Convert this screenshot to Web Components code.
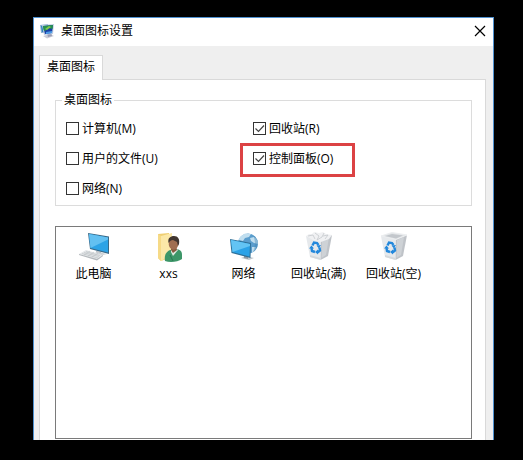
<!DOCTYPE html>
<html lang="zh-CN">
<head>
<meta charset="utf-8">
<title>桌面图标设置</title>
<style>
  html {
    background: #000;
  }

  body {
    box-sizing: border-box;
    display: flex;
    min-height: 100vh;
    margin: 0;
    padding: 17px 29px 20px 33px;
    color: #000;
    font: 12px/16px "Open Sans", "Noto Sans CJK SC", sans-serif;
  }
</style>
</head>
<body>
  <settings-dialog heading="桌面图标设置">
    <tab-panel tab="桌面图标">
      <option-group legend="桌面图标">
        <check-option>计算机(M)</check-option>
        <check-option checked>回收站(R)</check-option>
        <check-option>用户的文件(U)</check-option>
        <check-option checked marked>控制面板(O)</check-option>
        <check-option>网络(N)</check-option>
      </option-group>
      <icon-list>
        <icon-item icon="computer">此电脑</icon-item>
        <icon-item icon="user">xxs</icon-item>
        <icon-item icon="network">网络</icon-item>
        <icon-item icon="bin-full">回收站(满)</icon-item>
        <icon-item icon="bin-empty">回收站(空)</icon-item>
      </icon-list>
    </tab-panel>
  </settings-dialog>

<script>
const makeTemplate = (html) => {
  const template = document.createElement("template");
  template.innerHTML = html;
  return template;
};

const SettingsDialog = (() => {
  const template = makeTemplate(`
    <style>
      :host {
        display: flex;
        flex: 1;
        flex-direction: column;
        min-width: 0;
        border: 1px solid #4f91d0;
        border-bottom: none;
        background: #efefef;
      }

      header {
        box-sizing: border-box;
        display: flex;
        align-items: center;
        height: 28px;
        padding: 0 7px 3px 5px;
        background: #fff;
      }

      h1 {
        flex: 1;
        margin: 0 0 0 6px;
        font-size: 12px;
        font-weight: normal;
      }

      button {
        display: flex;
        padding: 0;
        border: none;
        background: none;
      }

      main {
        display: flex;
        flex: 1;
        flex-direction: column;
        padding: 9px 7px 0 5px;
      }
    </style>
    <header>
      <svg width="16" height="16" viewBox="0 0 16 16" aria-hidden="true">
        <path d="M4 13l7-2 4 2-7 2.500z" fill="#c9cbd6"/>
        <path d="M8 10l4-1 1 4-4 1z" fill="#9a9db4"/>
        <path d="M1 2l8-1v9l-7 0z" fill="#8fb4d2"/>
        <path d="M2 3l6-1v7l-5 0z" fill="#2b7fbd"/>
        <path d="M3 2l12-1-1 10-9 1z" fill="#c3d0e4"/>
        <path d="M4 3l10-1-1 8-7 1z" fill="#1a3fa6"/>
        <path d="M4 3l10-1-.5 4-3.500-1-4 3-1.500-1z" fill="#26924f"/>
        <path d="M6 6l4-3 2 1-4 3z" fill="#83c94a"/>
        <path d="M7 9l6-1v2l-6 1z" fill="#4a9be6"/>
      </svg>
      <h1></h1>
      <button type="button" aria-label="关闭">
        <svg width="12" height="12" viewBox="0 0 12 12">
          <path d="M1 1l10 10M11 1L1 11" fill="none" stroke="#000" stroke-width="1.2"/>
        </svg>
      </button>
    </header>
    <main><slot></slot></main>
  `);

  return class SettingsDialog extends HTMLElement {
    constructor() {
      super();
      this.attachShadow({ mode: "open" });
      this.shadowRoot.appendChild(template.content.cloneNode(true));
      this.shadowRoot.querySelector("h1").textContent =
        this.getAttribute("heading") ?? "";
      this.shadowRoot.querySelector("button").addEventListener("click", () => {
        this.remove();
      });
    }
  };
})();

const TabPanel = (() => {
  const template = makeTemplate(`
    <style>
      :host {
        display: flex;
        flex: 1;
        flex-direction: column;
      }

      button {
        z-index: 1;
        box-sizing: border-box;
        height: 25px;
        margin: 0;
        padding: 0 7px 2px;
        border: 1px solid #d9d9d9;
        border-bottom: none;
        background: #fff;
        color: inherit;
        font: inherit;
      }

      [role="tablist"] {
        display: flex;
        margin-bottom: -1px;
      }

      [role="tabpanel"] {
        display: flex;
        flex: 1;
        flex-direction: column;
        gap: 20px;
        padding: 12px 13px 1px 15px;
        border: 1px solid #d9d9d9;
        border-bottom: none;
        background: #fff;
      }
    </style>
    <div role="tablist">
      <button type="button" role="tab" id="tab" aria-selected="true" aria-controls="panel"></button>
    </div>
    <div role="tabpanel" id="panel" aria-labelledby="tab"><slot></slot></div>
  `);

  return class TabPanel extends HTMLElement {
    constructor() {
      super();
      this.attachShadow({ mode: "open" });
      this.shadowRoot.appendChild(template.content.cloneNode(true));
      this.shadowRoot.querySelector("button").textContent =
        this.getAttribute("tab") ?? "";
    }
  };
})();

const OptionGroup = (() => {
  const template = makeTemplate(`
    <style>
      :host {
        display: block;
      }

      fieldset {
        min-width: 0;
        margin: 0;
        padding: 12px 10px 8px;
        border: 1px solid #dcdcdc;
      }

      legend {
        margin-left: -4px;
        padding: 0 2px;
      }

      .options {
        display: grid;
        grid-template-columns: 187px 1fr;
        row-gap: 13px;
      }
    </style>
    <fieldset>
      <legend></legend>
      <div class="options"><slot></slot></div>
    </fieldset>
  `);

  return class OptionGroup extends HTMLElement {
    constructor() {
      super();
      this.attachShadow({ mode: "open" });
      this.shadowRoot.appendChild(template.content.cloneNode(true));
      this.shadowRoot.querySelector("legend").textContent =
        this.getAttribute("legend") ?? "";
    }
  };
})();

const CheckOption = (() => {
  const template = makeTemplate(`
    <style>
      :host {
        position: relative;
        display: block;
        justify-self: start;
      }

      /* red frame drawn around the option */
      :host([marked])::after {
        content: "";
        position: absolute;
        inset: -7px -22px -10px -13px;
        border: 3px solid #dc4244;
        pointer-events: none;
      }

      label {
        display: flex;
        align-items: center;
        gap: 3px;
        height: 17px;
      }

      .box {
        display: grid;
      }

      .box > * {
        grid-area: 1 / 1;
      }

      input {
        appearance: none;
        box-sizing: border-box;
        width: 13px;
        height: 13px;
        margin: 0;
        border: 1px solid #333;
        background: #fff;
      }

      svg {
        visibility: hidden;
        pointer-events: none;
      }

      input:checked + svg {
        visibility: visible;
      }
    </style>
    <label>
      <span class="box">
        <input type="checkbox">
        <svg width="13" height="13" viewBox="0 0 13 13">
          <path d="M2.5 6.5l3 3L11 3.5" fill="none" stroke="#444" stroke-width="1.2"/>
        </svg>
      </span>
      <span><slot></slot></span>
    </label>
  `);

  return class CheckOption extends HTMLElement {
    constructor() {
      super();
      this.attachShadow({ mode: "open" });
      this.shadowRoot.appendChild(template.content.cloneNode(true));
      this.shadowRoot.querySelector("input").checked =
        this.hasAttribute("checked");
    }
  };
})();

const IconList = (() => {
  const template = makeTemplate(`
    <style>
      :host {
        display: flex;
        flex: 1;
        flex-wrap: wrap;
        align-content: flex-start;
        padding-top: 4px;
        border: 1px solid #7a7a7a;
        background: #fff;
      }
    </style>
    <slot></slot>
  `);

  return class IconList extends HTMLElement {
    constructor() {
      super();
      this.attachShadow({ mode: "open" });
      this.shadowRoot.appendChild(template.content.cloneNode(true));
      this.setAttribute("role", "list");
    }
  };
})();

const IconItem = (() => {
  const template = makeTemplate(`
    <style>
      :host {
        display: flex;
        flex-direction: column;
        align-items: center;
        gap: 3px;
        width: 75px;
        text-align: center;
      }
    </style>
    <svg width="32" height="32" viewBox="0 0 32 32" aria-hidden="true"></svg>
    <span><slot></slot></span>
  `);

  const arrows = `
    <g fill="none" stroke="#2388dc" stroke-width="2.4">
      <path d="M9.500 14.500l1.500-3 3 .5 1.500 2"/>
      <path d="M16.500 16.500l.5 3-2.500 2"/>
      <path d="M12 21l-3-1-.5-3"/>
    </g>
    <path d="M13.500 14.500l4.500-.5-2 3.500zM15 18.500v5l-3-2.500zM6 17.500l2.500-3 2.500 3z" fill="#2388dc"/>`;

  const bin = `
    <path d="M3 5l15 3-.5 21L7 26z" fill="#e6e9ec"/>
    <path d="M18 8l11-4-4 21-7.500 4z" fill="#bfc3c8"/>
    <path d="M19 9l7-3-3 18-4.500 3z" fill="#ced2d6"/>
    <path d="M7 24l10.500 3v2L7 26z" fill="#d5d9dc"/>`;

  const icons = {
    computer: `
      <path d="M18 20l5 1 1 3-5-1z" fill="#a9b0b6"/>
      <path d="M16 22l4-1 9 2-4 1z" fill="#cdd2d6"/>
      <path d="M10 2l21 3.500V23l-19-5z" fill="#3a6a88"/>
      <path d="M11 3l19 3.500V21.500L12.500 17z" fill="#2da3e6"/>
      <path d="M11 3l19 3.500v2L12.500 17z" fill="#63c0f1"/>
      <path d="M1 23l7-4 17 5-6 5z" fill="#e3e6e8"/>
      <path d="M1 23l18 5 6-4v1l-6 4.500L1 24z" fill="#b3b8bc"/>
      <path d="M4 22.500l16 4.500M6 21.500l15 4M8 20.500l14 4M6 24l6-4M10 25l6-4M14 26l6-4" stroke="#bcc1c4" stroke-width=".6"/>`,
    user: `
      <path d="M5 3l11-1v25l-8 3-3-3z" fill="#efcf73"/>
      <path d="M8 5l11-3v22l-11 6z" fill="#fbe8a8"/>
      <path d="M5 3l3 2v25l-3-3z" fill="#f6da87"/>
      <path d="M12 30c-1-6 1-9 5-11l7-1c4 1 5 3 5 6v4c-4 3-12 4-17 2z" fill="#3c9668"/>
      <path d="M18 18l5-1 2 2-5 6-2-4z" fill="#dfe9e0"/>
      <path d="M18 16l5-1 1 4-4 3-2-3z" fill="#86583e"/>
      <ellipse cx="20.500" cy="13" rx="4.800" ry="5.700" fill="#a06e50"/>
      <path d="M15.500 12c-1-5 2-7 5.500-7 4 0 6 3 5 8l-1 2-1-4-4-2c-2 0-3 1-4.500 3z" fill="#40352f"/>
      <path d="M17 24l3 6" stroke="#23704a" stroke-width=".8"/>`,
    network: `
      <circle cx="20" cy="12.500" r="10" fill="#5a9dcd"/>
      <path d="M13 5l4-2.500 6 .5-2 3-4 1-2 3-4-1c0-2 1-3 2-4zM22 7l4-1c3 2 4 4 4 7l-4-1-3-2zM24 16l4 0-1 3-3 3z" fill="#c0deef"/>
      <path d="M25 4c3 2 5 5 5 8.500s-2 7.500-5 8.500c2-4 3-11 0-17z" fill="#3d7fae" opacity=".4"/>
      <path d="M13 27l5-2 8 2-5 2z" fill="#c1c8cd"/>
      <path d="M16 24l4 1v3l-4-1z" fill="#8f989f"/>
      <path d="M2 8l21 4-.5 15L3.500 22z" fill="#2f7098"/>
      <path d="M3 9l19 4-.5 12.500L4.500 21z" fill="#2ba2e7"/>
      <path d="M3 9l19 4v2L4.500 21z" fill="#63c4f4"/>`,
    "bin-full": `
      ${bin}
      <path d="M3 5l3-2 3 0 2-2 5 1 4-1 3 2 6 1-3 4-8 3-8-2z" fill="#f0f1f3"/>
      <path d="M5 5l5-1 2 4M12 2l4 3-2 4 5-3 2-4M20 5l5-1-3 4" fill="none" stroke="#c5c9cd" stroke-width=".8"/>
      ${arrows}`,
    "bin-empty": `
      ${bin}
      <path d="M3 5l11-3.500L29 4l-11 4.500z" fill="#e3e6e8" stroke="#eceef0"/>
      <path d="M7 5l7-2 11 1.500-7 3z" fill="#c3c7cc"/>
      ${arrows}`,
  };

  return class IconItem extends HTMLElement {
    constructor() {
      super();
      this.attachShadow({ mode: "open" });
      this.shadowRoot.appendChild(template.content.cloneNode(true));
      this.shadowRoot.querySelector("svg").innerHTML =
        icons[this.getAttribute("icon")] ?? "";
      this.setAttribute("role", "listitem");
    }
  };
})();

window.customElements.define("settings-dialog", SettingsDialog);
window.customElements.define("tab-panel", TabPanel);
window.customElements.define("option-group", OptionGroup);
window.customElements.define("check-option", CheckOption);
window.customElements.define("icon-list", IconList);
window.customElements.define("icon-item", IconItem);
</script>
</body>
</html>
